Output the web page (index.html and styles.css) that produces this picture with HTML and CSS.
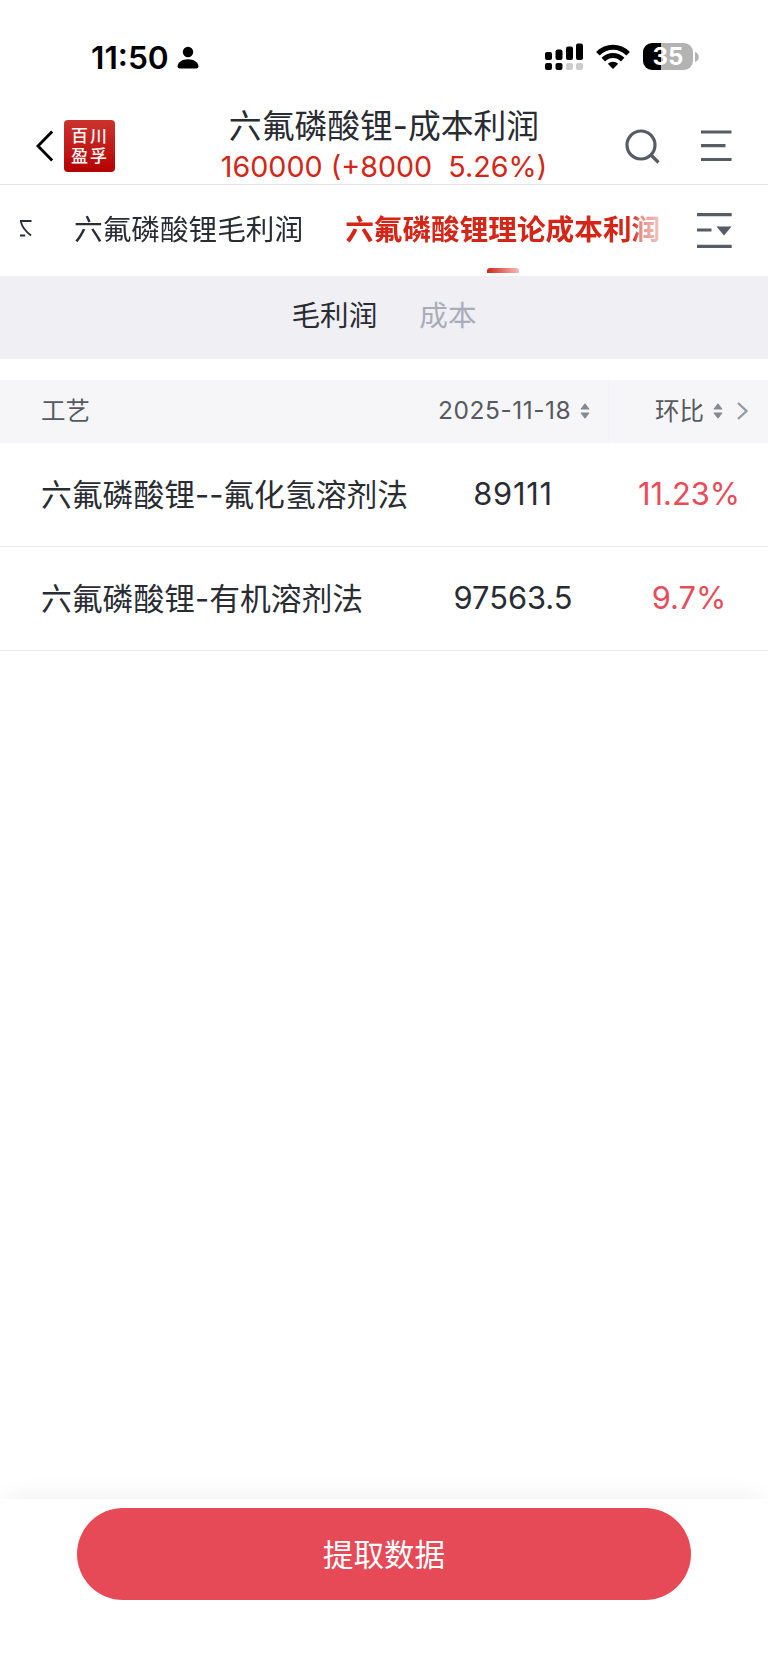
FILE: index.html
```html
<!DOCTYPE html>
<html lang="zh-CN">
<head>
<meta charset="utf-8">
<title>六氟磷酸锂-成本利润</title>
<link rel="stylesheet" href="styles.css">
</head>
<body>
<div class="screen">
  <div class="status">
    <div class="status-left">
      <span class="clock">11:50</span>
      <svg class="person" width="22" height="24" viewBox="0 0 22 24"><circle cx="11" cy="6" r="5.2"/><path d="M.6 20.2C.6 16 5.6 13.200 11 13.200s10.400 2.800 10.400 7c0 1.500-.8 2.200-2.200 2.200H2.800C1.400 22.400.6 21.700.6 20.200z"/></svg>
    </div>
    <div class="status-right">
      <svg width="39" height="28" viewBox="0 0 39 28"><g><rect x="0" y="9" width="7" height="8" rx="2"/><rect x="10.500" y="6.500" width="7" height="10.500" rx="2"/><rect x="21" y="3.500" width="7" height="13.500" rx="2"/><rect x="31" y="0.500" width="7" height="16.500" rx="2"/><rect x="0" y="20" width="7" height="7" rx="2"/><rect x="10.500" y="20" width="7" height="7" rx="2"/></g><g fill="#ccc"><rect x="21" y="20" width="7" height="7" rx="2"/><rect x="31" y="20" width="7" height="7" rx="2"/></g></svg>
      <svg class="wifi" width="34" height="26" viewBox="0 0 34 26"><g fill="none" stroke="#000" stroke-width="5"><path d="M1.900 9.700C10.500 1.200 23.500 1.200 32.100 9.700"/><path d="M7.300 15.600C12.800 10.200 21.200 10.200 26.700 15.600"/></g><path d="M17 25l-5.200-5.300c3-2.700 7.400-2.700 10.400 0z"/></svg>
      <div class="battery"><span>35</span></div>
      <svg class="cap" width="4" height="10" viewBox="0 0 4 10"><path d="M0 0c5 1.500 5 8.500 0 10z" fill="#b3b3b3"/></svg>
    </div>
  </div>

  <header class="nav">
    <svg class="back" width="18" height="32" viewBox="0 0 18 32"><path d="M16.200 1.500L2 16l14.200 14.500" fill="none" stroke="#000" stroke-width="2.900"/></svg>
    <div class="logo"><span>百川</span><span>盈孚</span></div>
    <div class="title">
      <h1>六氟磷酸锂-成本利润</h1>
      <p>160000 (+8000&nbsp; 5.26%)</p>
    </div>
    <svg class="search" width="36" height="36" viewBox="0 0 36 36"><g fill="none" stroke="#565c66" stroke-width="3.200"><circle cx="16" cy="16" r="14"/><path d="M25.500 25.500l8 8"/></g></svg>
    <svg class="menu" width="31" height="32" viewBox="0 0 31 32"><path d="M0 2h30.500M0 15.700h24.500M0 29.500h30.500" stroke="#565c66" stroke-width="3.200"/></svg>
  </header>

  <nav class="tabs">
    <div class="tab-strip">
      <svg class="clipped" width="12" height="17" viewBox="0 0 12 17"><path d="M0 1h11.500M0 15.500h5.200M.8 1.500C2 7 5 11 11 15.500" fill="none" stroke="#292c32" stroke-width="1.800"/></svg>
      <span class="tab">六氟磷酸锂毛利润</span>
      <span class="tab active">六氟磷酸锂理论成本利润</span>
    </div>
    <svg class="filter" width="35" height="35" viewBox="0 0 35 35"><path d="M0 1.700h34.700M0 17h14.500M0 33.300h34.700" stroke="#565c66" stroke-width="3.200"/><path d="M19.500 13.500h15L27 22.500z" fill="#565c66"/></svg>
  </nav>

  <div class="subtabs"><span>毛利润</span><span class="muted">成本</span></div>

  <div class="table">
    <div class="row head">
      <div class="name">工艺</div>
      <div class="date"><span>2025-11-18</span><svg class="sort" width="10" height="16" viewBox="0 0 10 16"><path d="M5 1.200L8.800 6H1.200zM5 14.800L8.800 10H1.200z"/></svg></div>
      <div class="ratio"><span>环比</span><svg class="sort" width="10" height="16" viewBox="0 0 10 16"><path d="M5 1.200L8.800 6H1.200zM5 14.800L8.800 10H1.200z"/></svg><svg class="more" width="11" height="18" viewBox="0 0 11 18"><path d="M1 1l8.500 8L1 17"/></svg></div>
    </div>
    <div class="row"><div class="name">六氟磷酸锂--氟化氢溶剂法</div><div class="num wide">89111</div><div class="pct">11.23%</div></div>
    <div class="row"><div class="name">六氟磷酸锂-有机溶剂法</div><div class="num">97563.5</div><div class="pct">9.7%</div></div>
  </div>

  <footer class="footer"><button class="submit">提取数据</button></footer>
</div>
</body>
</html>
```
FILE: styles.css
```css
* { box-sizing: border-box; margin: 0; padding: 0; }
body { background: #fff; font-family: Inter, "Noto Sans CJK SC", sans-serif; color: #292c32; }
svg { display: block; flex: none; }
.screen { width: 768px; height: 1669px; display: flex; flex-direction: column; overflow: hidden; white-space: nowrap; }

.status { height: 110px; display: flex; justify-content: space-between; padding: 41px 69px 0 91px; }
.status-left { display: flex; height: 34px; align-items: center; gap: 8px; }
.clock { font-size: 31.700px; font-weight: 600; color: #000; line-height: 34px; }
.status-right { display: flex; height: 31px; align-items: center; }
.wifi { margin-left: 12px; }
.battery { margin-left: 13px; width: 50px; height: 27px; border-radius: 9px; background: linear-gradient(90deg, #000 36%, #b3b3b3 36%); color: #fff; font-weight: 700; font-size: 24px; line-height: 27px; text-align: center; }
.cap { margin-left: 2px; }

.nav { height: 75px; display: flex; border-bottom: 1px solid #e4e4e6; padding-left: 36px; }
.back { margin-top: 20px; }
.logo { margin: 10px 0 0 10px; width: 51px; height: 52px; border-radius: 4px; background: linear-gradient(#cb3330, #bf1512 65%, #b30000); color: #fff; font-size: 17px; font-weight: 500; line-height: 20px; letter-spacing: 2px; padding: 6px 0 0 7px; display: flex; flex-direction: column; }
.title { width: 420px; margin-left: 59px; text-align: center; }
.title h1 { font-size: 32.800px; font-weight: 400; line-height: 32px; }
.title p { font-size: 28.700px; line-height: 32px; color: #d42517; margin-top: 9px; }
.search { margin: 19px 0 0 31px; }
.menu { margin: 20px 0 0 40px; }

.tabs { height: 91px; display: flex; }
.tab-strip { width: 664px; height: 91px; display: flex; padding-left: 20px; -webkit-mask-image: linear-gradient(90deg, #000 633px, rgba(0,0,0,.5) 641px, rgba(0,0,0,.22) 664px); mask-image: linear-gradient(90deg, #000 633px, rgba(0,0,0,.5) 641px, rgba(0,0,0,.22) 664px); }
.clipped { margin: 35px 42px 0 0; }
.tab { font-size: 28.650px; line-height: 89px; height: 91px; margin-right: 42px; }
.active { color: #d42517; font-weight: 700; position: relative; }
.active::after { content: ""; position: absolute; left: 142px; bottom: 3px; width: 32px; height: 5px; border-radius: 3px 3px 0 0; background: linear-gradient(90deg, #d42517, #f4bcb8); }
.filter { margin: 28px 0 0 33px; }

.subtabs { height: 83px; background: #efeff4; display: flex; justify-content: center; gap: 42px; font-size: 28.600px; line-height: 79px; }
.muted { color: #a9adbb; }

.table { margin-top: 21px; }
.row { display: grid; grid-template-columns: 417px 192px 159px; height: 104px; border-bottom: 1px solid #ebebed; align-items: center; font-size: 30.800px; }
.row.head { height: 63px; background: #f6f6f9; border: 0; color: #565960; font-size: 24.500px; }
.name { padding: 0 0 5px 41px; }
.num { text-align: center; padding-bottom: 2px; }
.wide { letter-spacing: .8px; }
.pct { text-align: center; color: #e94b59; padding: 0 0 2px 1px; }
.date, .ratio { display: flex; align-items: center; gap: 9px; height: 63px; }
.date span, .ratio span { padding-bottom: 4px; }
.date { padding-left: 21px; border-right: 1px solid #f3f3f7; }
.date span { letter-spacing: .55px; }
.ratio { padding-left: 46px; }
.sort { position: relative; top: -1px; fill: #858890; stroke: #858890; stroke-width: 1.200; stroke-linejoin: round; }
.more { fill: none; stroke: #9699a0; stroke-width: 2.400; margin-left: 5px; position: relative; top: -1px; }

.footer { margin-top: auto; height: 170px; display: flex; justify-content: center; padding-top: 9px; background: #fff; box-shadow: 0 -8px 24px -8px rgba(0,0,0,.08); }
.submit { width: 614px; height: 92px; border: 0; border-radius: 46px; background: #e64a57; color: #fff; font-family: inherit; font-size: 30.600px; padding-bottom: 3px; }
```
